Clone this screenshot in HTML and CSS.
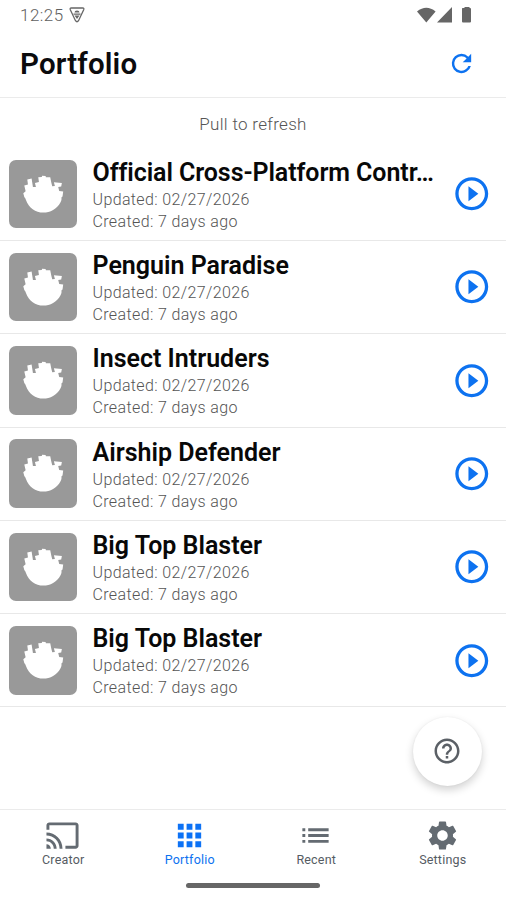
FILE: index.html
```html
<!DOCTYPE html>
<html lang="en">
<head>
<meta charset="utf-8">
<title>Portfolio</title>
<link rel="stylesheet" href="styles.css">
</head>
<body>
<svg class="defs" aria-hidden="true">
  <symbol id="ship" viewBox="27 28 206 206"><path d="M70 128L77 122L73 105L84 102L82 87L95 84L99 109L108 109L105 97L117 94L115 80L126 79L126 75L137 76L138 80L151 80L154 95L157 107L165 106L162 95L186 97L184 108L175 109L178 121L190 123L188 138L185 140Q186 149 182 155C171 176 151 186 130 186C107 186 86 172 78 148Q77 143 73 139Z"/></symbol>
  <symbol id="play" viewBox="0 0 24 24"><path d="M10 16.500l6-4.500-6-4.500v9zM12 2C6.480 2 2 6.480 2 12s4.480 10 10 10 10-4.480 10-10S17.520 2 12 2zm0 18c-4.410 0-8-3.590-8-8s3.590-8 8-8 8 3.590 8 8-3.590 8-8 8z"/></symbol>
</svg>
<div class="screen">
  <div class="status">
    <span class="clock">12:25</span>
    <svg class="debug" viewBox="0 0 16 16"><path d="M2.300 1H13.700Q15.300 1 14.700 2.700L9.500 13.700Q8 15.800 6.500 13.700L1.300 2.700Q.7 1 2.300 1Z" fill="none" stroke="#666" stroke-width="1.300"/><path d="M5.500 5.500q0-2 2.500-2t2.500 2zM4.500 6.500h7v1.300h-7zM5.500 8.500h5L8 12z" fill="#666"/></svg>
    <svg class="signals" viewBox="0 0 54 17"><path d="M0 4.500Q9.300-3 18.600 4.500L9.300 15.500ZM20 15.500L35 0V15.500ZM45.500 1h2V0h5v1h.5q1 0 1 1v12.500q0 1-1 1h-7q-1 0-1-1V2q0-1 .5-1z" fill="#666"/></svg>
  </div>
  <header class="header">
    <h1>Portfolio</h1>
    <svg class="refresh" viewBox="0 0 24 24"><path d="M17.650 6.350A7.958 7.958 0 0 0 12 4a8 8 0 1 0 7.730 10h-2.080A6 6 0 1 1 12 6c1.660 0 3.140.69 4.220 1.780L13 11h7V4z"/></svg>
  </header>
  <p class="pull">Pull to refresh</p>
  <main class="list">
    <article class="row"><div class="thumb"><svg><use href="#ship"/></svg></div><div class="info"><h2 class="long">Official Cross-Platform Contr…</h2><p>Updated: 02/27/2026</p><p>Created: 7 days ago</p></div><svg class="play"><use href="#play"/></svg></article>
    <article class="row"><div class="thumb"><svg><use href="#ship"/></svg></div><div class="info"><h2>Penguin Paradise</h2><p>Updated: 02/27/2026</p><p>Created: 7 days ago</p></div><svg class="play"><use href="#play"/></svg></article>
    <article class="row"><div class="thumb"><svg><use href="#ship"/></svg></div><div class="info"><h2>Insect Intruders</h2><p>Updated: 02/27/2026</p><p>Created: 7 days ago</p></div><svg class="play"><use href="#play"/></svg></article>
    <article class="row"><div class="thumb"><svg><use href="#ship"/></svg></div><div class="info"><h2>Airship Defender</h2><p>Updated: 02/27/2026</p><p>Created: 7 days ago</p></div><svg class="play"><use href="#play"/></svg></article>
    <article class="row"><div class="thumb"><svg><use href="#ship"/></svg></div><div class="info"><h2>Big Top Blaster</h2><p>Updated: 02/27/2026</p><p>Created: 7 days ago</p></div><svg class="play"><use href="#play"/></svg></article>
    <article class="row"><div class="thumb"><svg><use href="#ship"/></svg></div><div class="info"><h2>Big Top Blaster</h2><p>Updated: 02/27/2026</p><p>Created: 7 days ago</p></div><svg class="play"><use href="#play"/></svg></article>
  </main>
  <div class="fab"><svg viewBox="0 0 24 24"><path d="M11 18h2v-2h-2v2zm1-16C6.480 2 2 6.480 2 12s4.480 10 10 10 10-4.480 10-10S17.520 2 12 2zm0 18c-4.410 0-8-3.590-8-8s3.590-8 8-8 8 3.590 8 8-3.590 8-8 8zm0-14c-2.210 0-4 1.790-4 4h2c0-1.100.9-2 2-2s2 .9 2 2c0 2-3 1.750-3 5h2c0-2.250 3-2.500 3-5 0-2.210-1.790-4-4-4z"/></svg></div>
  <nav class="tabs">
    <div class="tab"><svg viewBox="0 0 24 24"><path d="M21 3H3c-1.100 0-2 .9-2 2v3h2V5h18v14h-7v2h7c1.100 0 2-.9 2-2V5c0-1.100-.9-2-2-2zM1 18v3h3c0-1.660-1.340-3-3-3zm0-4v2c2.760 0 5 2.240 5 5h2c0-3.870-3.130-7-7-7zm0-4v2c4.970 0 9 4.030 9 9h2c0-6.080-4.930-11-11-11z"/></svg><span>Creator</span></div>
    <div class="tab active"><svg viewBox="0 0 24 24"><path d="M4 8h4V4H4zm6 12h4v-4h-4zm-6 0h4v-4H4zm0-6h4v-4H4zm6 0h4v-4h-4zm6-10v4h4V4zm-6 4h4V4h-4zm6 6h4v-4h-4zm0 6h4v-4h-4z"/></svg><span>Portfolio</span></div>
    <div class="tab"><svg viewBox="0 0 24 24"><path d="M3 13h2v-2H3zm0 4h2v-2H3zm0-8h2V7H3zm4 4h14v-2H7zm0 4h14v-2H7zM7 7v2h14V7z"/></svg><span>Recent</span></div>
    <div class="tab"><svg viewBox="0 0 24 24"><path d="M19.140 12.940c.04-.3.060-.61.060-.94 0-.32-.02-.64-.07-.94l2.030-1.580c.18-.14.230-.41.120-.61l-1.920-3.320c-.12-.22-.37-.29-.59-.22l-2.390.96c-.5-.38-1.030-.7-1.620-.94l-.36-2.540c-.04-.24-.24-.41-.48-.41h-3.840c-.24 0-.43.17-.47.41l-.36 2.540c-.59.24-1.130.57-1.620.94l-2.390-.96c-.22-.08-.47 0-.59.22L2.740 8.870c-.12.21-.08.470.12.610l2.030 1.580c-.05.3-.09.630-.09.940s.02.640.07.940l-2.030 1.580c-.18.14-.23.410-.12.610l1.920 3.320c.12.220.37.290.59.220l2.390-.96c.5.380 1.030.7 1.620.940l.36 2.540c.05.240.24.410.48.410h3.840c.24 0 .44-.17.470-.41l.36-2.540c.59-.24 1.130-.56 1.620-.94l2.390.96c.22.080.47 0 .59-.22l1.920-3.320c.12-.22.070-.47-.12-.61l-2.010-1.580zM12 15.600c-1.980 0-3.600-1.620-3.600-3.600s1.620-3.600 3.600-3.600 3.600 1.620 3.600 3.600-1.620 3.600-3.600 3.600z"/></svg><span>Settings</span></div>
  </nav>
  <div class="home"></div>
</div>
</body>
</html>
```
FILE: styles.css
```css
* { box-sizing: border-box; }
body, h1, h2, p { margin: 0; }
body { background: #fff; font-family: Roboto, sans-serif; }
svg { display: block; flex: none; }
.defs { width: 0; height: 0; overflow: hidden; }
.screen {
  width: 506px;
  height: 900px;
  display: flex;
  flex-direction: column;
  overflow: hidden;
  position: relative;
}
.status {
  height: 30px;
  display: flex;
  align-items: center;
  padding: 0 35px 0 20px;
  color: #5f5f5f;
}
.clock { font-size: 17px; font-weight: 350; letter-spacing: .45px; }
.debug { width: 16px; height: 16px; margin-left: 5px; }
.signals { width: 54px; height: 17px; margin-left: auto; overflow: visible; }
.header {
  height: 68px;
  padding: 1px 30px 0 20px;
  display: flex;
  align-items: center;
  justify-content: space-between;
  border-bottom: 1px solid #ebebeb;
}
h1 { font-size: 29.500px; font-weight: 600; line-height: 34px; letter-spacing: .15px; color: #0b0b0d; }
.refresh { width: 29px; height: 29px; margin-bottom: 2px; fill: #0d72f0; }
.pull {
  height: 49.700px;
  line-height: 53px;
  text-align: center;
  font-size: 17px;
  font-weight: 350;
  letter-spacing: .3px;
  color: #555;
}
.row {
  height: 93.300px;
  display: flex;
  align-items: center;
  padding: 0 15px 0 8.500px;
  border-bottom: 1px solid #e8e8e8;
}
.thumb { width: 68.500px; height: 68.500px; border-radius: 7px; background: #999; flex: none; }
.thumb svg { width: 100%; height: 100%; fill: #fff; }
.info { width: 350px; margin-left: 15.500px; padding-top: 3px; }
.info h2 {
  font-size: 25px;
  font-weight: 600;
  line-height: 30px;
  color: #080808;
  white-space: nowrap;
}
.info .long { letter-spacing: -.08px; }
.info p { font-size: 16px; font-weight: 350; line-height: 22px; letter-spacing: .37px; color: #555; }
.info h2 + p { margin-top: 1px; }
.play { width: 39.500px; height: 39.500px; margin-left: auto; fill: #0d72f0; }
.fab {
  position: absolute;
  left: 413px;
  top: 717px;
  width: 69px;
  height: 69px;
  border-radius: 50%;
  background: #fff;
  box-shadow: 0 4px 8px rgba(0, 0, 0, .18), 0 0 2px rgba(0, 0, 0, .06);
  display: flex;
  align-items: center;
  justify-content: center;
}
.fab svg { width: 30px; height: 30px; margin: 0 1px 1px 0; fill: #5b6066; }
.tabs {
  height: 63px;
  margin-top: auto;
  border-top: 1px solid #ebebeb;
  display: flex;
}
.tab {
  flex: 1;
  display: flex;
  flex-direction: column;
  align-items: center;
  padding-top: 8px;
  font-size: 12.500px;
  line-height: 14px;
  letter-spacing: .2px;
  color: #555c63;
}
.tab svg { width: 35px; height: 35px; margin-right: 1px; fill: #646b72; }
.active { color: #0d72f0; }
.active svg { fill: #0d72f5; }
.home {
  width: 134px;
  height: 5px;
  border-radius: 3px;
  background: #666;
  margin: 11px auto 12px;
  flex: none;
}
```
